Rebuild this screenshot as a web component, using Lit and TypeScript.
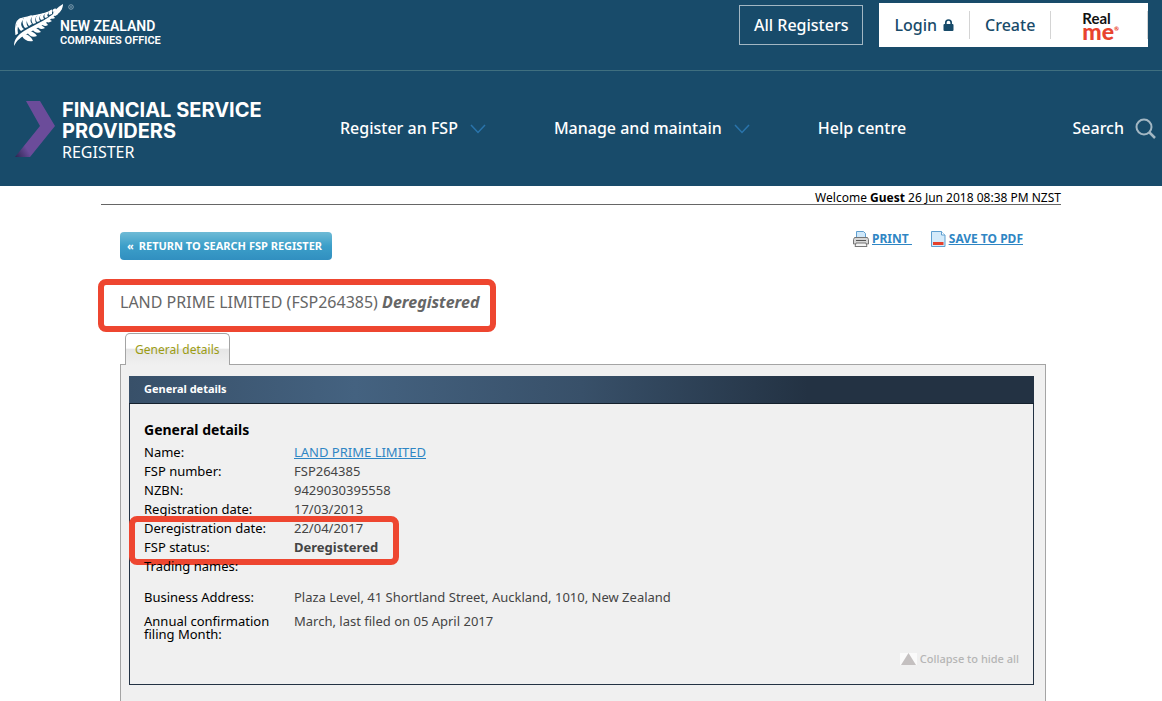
import { LitElement, html, svg, css } from "lit";
import { customElement } from "lit/decorators.js";

const chevron = html`<svg class="chevron" width="16" height="10" viewBox="0 0 16 10" aria-hidden="true">
  <path d="M1 1l7 7.500 7-7.500" fill="none" stroke="#2a74ab" stroke-width="1.500" />
</svg>`;

const FRONDS_UP = [
  "M21 31C17 27 16 22 19 19c3-2 5-1 4 1-3 3-2 7 1 9z",
  "M25 28c-3-4-3-8-1-10 3-2 5-1 4 1-2 2-2 5 0 8z",
  "M29 26c-3-4-3-8 0-10 3-1 4 0 3 1-2 2-2 5 0 7z",
  "M33 24c-2-3-2-7 0-8 3-1 4 0 3 1-1 2-1 4 0 6z",
  "M37 22c-2-3-1-6 1-7 2-1 3 0 2 1-1 2-1 3 0 5z",
  "M41 20c-2-3-1-5 1-6 2-1 3 0 2 1-1 1-1 2 0 4z",
  "M45 18c-1-2-1-4 1-5 2-1 3 0 2 1-1 1-1 1 0 3z",
  "M49 15c-1-2 0-3 1-4 2-1 3 0 2 1v2z",
  "M53 12c-1-2 0-3 1-3 2-1 2 0 2 1v1z",
];
const FRONDS_DOWN = [
  "M22 36c2 4 6 6 11 5-1-3-4-6-8-7z",
  "M27 32c2 4 6 6 10 4-2-3-4-4-7-5z",
  "M32 29c2 3 5 5 9 3-2-2-4-4-7-4z",
  "M37 26c2 3 4 4 8 2-2-2-4-3-6-3z",
  "M41 23c2 3 4 4 7 2-1-2-3-3-5-3z",
  "M45 20c2 3 4 3 7 1-2-1-3-2-5-2z",
  "M49 17c2 2 4 2 6 1-1-2-3-2-4-2z",
  "M53 14c1 2 3 2 5 0-1-1-2-1-3-1z",
  "M56 11c1 1 3 1 4-1h-3z",
];

const fern = html`<svg class="fern" width="64" height="48" viewBox="10 0 64 48" aria-hidden="true">
  <g fill="#fff">
    <path d="M14 46c0-7 4-11 10-15 11-7 28-12 39-27-8 16-24 23-36 30-6 3-10 6-13 12z" />
    <path d="M16 35c-1-7 0-14 4-16 9-4 22-2 32-9" fill="none" stroke="#fff" stroke-width="1.200" />
    <path d="M17 34c-1-5 0-10 3-14" fill="none" stroke="#fff" stroke-width="2" />
    ${[...FRONDS_UP, ...FRONDS_DOWN].map((d) => svg`<path d=${d} />`)}
    <path d="M63 4c-5 3-8 6-10 9l2 3c5-3 8-7 8-12z" />
  </g>
  <circle cx="71" cy="7" r="2.300" fill="none" stroke="#a9bfcc" stroke-width=".7" />
  <path d="M70 7h2" stroke="#a9bfcc" stroke-width=".8" />
</svg>`;

interface Detail {
  label: string;
  value: unknown;
  kind?: string;
}

const DETAILS: Detail[] = [
  { label: "Name:", value: html`<a class="link" href="#company">LAND PRIME LIMITED</a>` },
  { label: "FSP number:", value: "FSP264385" },
  { label: "NZBN:", value: "9429030395558" },
  { label: "Registration date:", value: "17/03/2013" },
  { label: "Deregistration date:", value: "22/04/2017", kind: "marked" },
  { label: "FSP status:", value: html`<b>Deregistered</b>` },
  { label: "Trading names:", value: "" },
  {
    label: "Business Address:",
    value: "Plaza Level, 41 Shortland Street, Auckland, 1010, New Zealand",
    kind: "spaced",
  },
  { label: "Annual confirmation filing Month:", value: "March, last filed on 05 April 2017", kind: "final" },
];

@customElement("site-header")
class SiteHeader extends LitElement {
  static styles = css`
    :host {
      display: block;
      background: #184b6a;
      color: #fff;
      font-family: "Noto Sans", "Open Sans", sans-serif;
      font-weight: 500;
    }
    a { color: inherit; text-decoration: none; }
    .top {
      display: flex;
      align-items: flex-start;
      box-sizing: border-box;
      height: 71px;
      padding: 0 14px 0 10px;
      border-bottom: 1px solid #3f6f7f;
    }
    .office { display: flex; align-items: flex-start; }
    .office-name {
      margin: 18px 0 0 -14px;
      font-family: "Roboto", sans-serif;
      font-weight: 600;
      white-space: nowrap;
    }
    .line1 { display: block; font-size: 14px; line-height: 16px; }
    .line2 { display: block; font-size: 11px; line-height: 13px; }
    .actions { display: flex; margin-left: auto; padding-top: 3px; gap: 16px; }
    .registers {
      box-sizing: border-box;
      height: 40px;
      margin-top: 2px;
      padding: 0 14px;
      border: 1px solid #a3b7c3;
      font-size: 16px;
      line-height: 38px;
    }
    .account {
      display: flex;
      align-items: center;
      height: 44px;
      background: #fff;
      color: #184b6a;
      font-size: 16px;
    }
    .account a {
      display: flex;
      align-items: center;
      gap: 6px;
      height: 28px;
      padding: 0 15px;
      border-right: 1px solid #d4d4d4;
    }
    .account .realme {
      flex-direction: column;
      align-items: flex-start;
      justify-content: center;
      gap: 0;
      padding: 0 28px 0 31px;
      font-family: "Lato", sans-serif;
    }
    .real { color: #111; font-size: 15px; line-height: 12px; font-weight: 700; }
    .me { display: flex; color: #e8432e; font-size: 23px; line-height: 15px; font-weight: 900; }
    .reg { font-size: 6px; line-height: 10px; }
    .nav {
      display: flex;
      align-items: center;
      height: 115px;
      padding: 0 6px 0 14px;
      font-size: 16px;
    }
    .brand { display: flex; align-items: center; gap: 6px; width: 326px; }
    .brand-name {
      padding-top: 5px;
      font-family: "Inter", sans-serif;
      font-size: 20px;
      line-height: 21px;
      font-weight: 700;
      white-space: nowrap;
    }
    .brand-name span { display: block; }
    .brand-name .thin {
      font-family: "Noto Sans", sans-serif;
      font-size: 16px;
      font-weight: 400;
    }
    .menu { display: flex; gap: 68px; white-space: nowrap; }
    .menu a { display: flex; align-items: center; gap: 12px; }
    .search { display: flex; align-items: center; gap: 11px; margin-left: auto; }
  `;

  render() {
    return html`
      <div class="top">
        <a class="office" href="#home">
          ${fern}
          <span class="office-name">
            <span class="line1">NEW ZEALAND</span>
            <span class="line2">COMPANIES OFFICE</span>
          </span>
        </a>
        <div class="actions">
          <a class="registers" href="#registers">All Registers</a>
          <div class="account">
            <a href="#login">Login
              <svg width="11" height="13" viewBox="0 0 11 13" aria-hidden="true">
                <rect x="0.500" y="5" width="10" height="7" rx="1" fill="#184b6a" />
                <path d="M2.800 6V3.700a2.700 2.700 0 0 1 5.400 0V6" fill="none" stroke="#184b6a" stroke-width="1.700" />
              </svg>
            </a>
            <a href="#create">Create</a>
            <a class="realme" href="#realme">
              <span class="real">Real</span>
              <span class="me">me<span class="reg">®</span></span>
            </a>
          </div>
        </div>
      </div>
      <nav class="nav">
        <a class="brand" href="#fsp">
          <svg width="42" height="58" viewBox="14 101 42 58" aria-hidden="true">
            <defs>
              <linearGradient id="arrow" x1="0" y1="1" x2="0.350" y2="0.700">
                <stop offset="0" stop-color="#2b2550" />
                <stop offset="0.700" stop-color="#6b4c9a" />
              </linearGradient>
            </defs>
            <path d="M26 102h14l15 25-25 31H15l25-31z" fill="url(#arrow)" />
          </svg>
          <span class="brand-name">
            <span>FINANCIAL SERVICE</span>
            <span>PROVIDERS</span>
            <span class="thin">REGISTER</span>
          </span>
        </a>
        <div class="menu">
          <a href="#register">Register an FSP ${chevron}</a>
          <a href="#manage">Manage and maintain ${chevron}</a>
          <a href="#help">Help centre</a>
        </div>
        <a class="search" href="#search">Search
          <svg width="21" height="21" viewBox="0 0 21 21" aria-hidden="true">
            <circle cx="9" cy="9" r="7.500" fill="none" stroke="#a3b7c3" stroke-width="2" />
            <path d="M14 14l6 6" stroke="#a3b7c3" stroke-width="2.500" />
          </svg>
        </a>
      </nav>
    `;
  }
}

@customElement("app-root")
class AppRoot extends LitElement {
  static styles = css`
    :host {
      display: block;
      min-height: 100vh;
      background: #fff;
      color: #000;
      font: 13px/19px "Noto Sans", "Open Sans", sans-serif;
    }
    .page { max-width: 960px; margin: 0 auto; }
    .welcome {
      height: 18px;
      border-bottom: 1px solid #666;
      font-size: 12px;
      line-height: 24px;
      text-align: right;
    }
    .content { padding: 27px 15px 0 19px; }
    .toolbar { display: flex; justify-content: space-between; align-items: flex-start; }
    .return {
      display: flex;
      gap: 5px;
      height: 28px;
      padding: 0 10px 0 7px;
      border: 0;
      border-radius: 4px;
      background: linear-gradient(#6fbbd6, #3c9fc9 50%, #318fc0);
      color: #fff;
      font: 700 11px/28px "Noto Sans", "Open Sans", sans-serif;
    }
    .link { color: #2f86c4; text-decoration: underline; }
    .tools {
      display: flex;
      gap: 19px;
      padding-right: 23px;
      font-size: 12px;
      line-height: 14px;
      font-weight: 700;
    }
    .tool { display: flex; align-items: center; gap: 3px; height: 14px; color: #2f86c4; }
    .company {
      position: relative;
      margin: 0;
      padding: 31px 0 20px;
      color: #666;
      font-size: 16px;
      line-height: 22px;
      font-weight: 400;
    }
    .mark {
      position: absolute;
      box-sizing: border-box;
      border: 6px solid #ee4630;
      border-radius: 8px;
      pointer-events: none;
    }
    .mark-title { left: -22px; top: 19px; width: 398px; height: 53px; }
    .mark-status { left: -15px; top: -3px; width: 270px; height: 49px; }
    .tab {
      display: block;
      position: relative;
      width: max-content;
      margin: 0 0 -1px 5px;
      padding: 0 9px;
      border: 1px solid #a4a4a4;
      border-bottom: 0;
      border-radius: 5px 5px 0 0;
      background: linear-gradient(#fff 45%, #e6e6e6 50%, #f0f0f0);
      color: #9c9c14;
      font: 12px/31px "Noto Sans", "Open Sans", sans-serif;
    }
    .outer {
      padding: 11px 11px 24px 8px;
      border: 1px solid #a4a4a4;
      background: #f0f0f0;
    }
    .panel-title {
      margin: 0;
      padding: 0 15px 1px;
      border-bottom: 1px solid #14202c;
      background: linear-gradient(90deg, #385069, #446280 25%, #385069 50%, #233243 75%);
      color: #fff;
      font-size: 11px;
      line-height: 26px;
      font-weight: 700;
    }
    .panel { padding: 16px 14px; border: 1px solid #233243; border-top: 0; }
    .section { margin: 0 0 3px; font-size: 14px; line-height: 20px; font-weight: 700; }
    .details { margin: 0; }
    .row { position: relative; display: grid; grid-template-columns: 134px 1fr; column-gap: 16px; }
    .row dd { margin: 0; color: #444; }
    .spaced { margin: 12px 0 5px; }
    .final dt { padding-top: 3px; line-height: 13px; }
    .collapse {
      display: flex;
      align-items: center;
      gap: 3px;
      margin: 9px 0 0 auto;
      padding: 0;
      border: 0;
      background: none;
      color: #b5b5b5;
      font: 500 11px/18px "Noto Sans", "Open Sans", sans-serif;
    }
  `;

  render() {
    return html`
      <site-header></site-header>
      <main class="page">
        <div class="welcome">Welcome <b>Guest</b> 26 Jun 2018 08:38 PM NZST</div>
        <div class="content">
          <div class="toolbar">
            <button class="return" type="button"><span>«</span><span>RETURN TO SEARCH FSP REGISTER</span></button>
            <div class="tools">
              <a class="tool" href="#print">
                <svg width="16" height="16" viewBox="0 0 16 16" aria-hidden="true">
                  <path d="M3.500 7V.5h7l2 2V7z" fill="#cfe8fa" stroke="#5f9fd0" />
                  <path d="M1.500 6.500h13l1 2v4.500H.5V8.500z" fill="#d6d6d6" stroke="#777" />
                  <path d="M3 9.500h10" stroke="#555" />
                  <path d="M3 12h10l1 3.500H2z" fill="#f4f4f4" stroke="#777" />
                </svg>
                <span class="link">PRINT&nbsp;</span>
              </a>
              <a class="tool" href="#pdf">
                <svg width="15" height="16" viewBox="0 0 15 16" aria-hidden="true">
                  <path d="M.5.5h10l3.500 3.500v11.500H.5z" fill="#d4eafa" stroke="#5f9fd0" />
                  <path d="M10.500.5V4H14" fill="#fff" stroke="#5f9fd0" />
                  <path d="M2 11h10.500v3H2z" fill="#e5402c" />
                </svg>
                <span class="link">SAVE TO PDF</span>
              </a>
            </div>
          </div>
          <h1 class="company">
            LAND PRIME LIMITED (FSP264385) <b><i>Deregistered</i></b>
            <span class="mark mark-title"></span>
          </h1>
          <button class="tab" type="button">General details</button>
          <section class="outer">
            <h2 class="panel-title">General details</h2>
            <div class="panel">
              <h3 class="section">General details</h3>
              <dl class="details">
                ${DETAILS.map(
                  (d) => html`<div class="row ${d.kind ?? ""}">
                    <dt>${d.label}</dt>
                    <dd>
                      ${d.value}
                      ${d.kind === "marked" ? html`<span class="mark mark-status"></span>` : ""}
                    </dd>
                  </div>`
                )}
              </dl>
              <button class="collapse" type="button">
                <svg width="17" height="12" viewBox="0 0 17 12" aria-hidden="true">
                  <path d="M0 0h17v12H0z" fill="#fafafa" />
                  <path d="M8.500 0L16 12H1z" fill="#c4c0c0" />
                </svg>
                Collapse to hide all
              </button>
            </div>
          </section>
        </div>
      </main>
    `;
  }
}
